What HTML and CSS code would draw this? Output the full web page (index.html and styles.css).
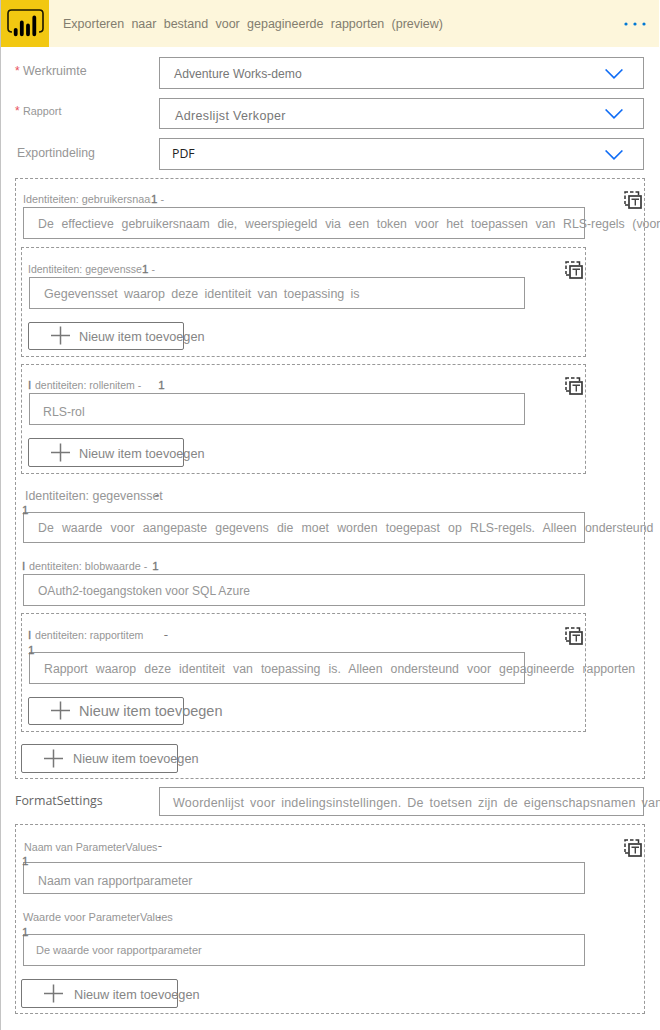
FILE: index.html
```html
<!DOCTYPE html>
<html lang="nl">
<head>
<meta charset="utf-8">
<title>Exporteren naar bestand voor gepagineerde rapporten</title>
<link rel="stylesheet" href="styles.css">
</head>
<body>
<svg class="defs" aria-hidden="true">
  <symbol id="switch" viewBox="0 0 18 18">
    <path d="M1 2.500V1H4M6 1h3.500M11.500 1h3v3M1 4.500v3.500M1 10v3M1 14h3.500" fill="none" stroke="#333" stroke-width="1.5"/>
    <rect x="5" y="5" width="12" height="12" fill="#fff" stroke="#3a3a3a" stroke-width="1.700"/>
    <path d="M7.500 8.200h7.500M11.300 8v6.500" fill="none" stroke="#444" stroke-width="1.4"/>
  </symbol>
  <symbol id="plus" viewBox="0 0 19 19">
    <path d="M0 9.5h19M9.5 .5v18" fill="none" stroke="#777" stroke-width="1.5"/>
  </symbol>
  <symbol id="chevron" viewBox="0 0 18 10">
    <path d="M.6 .5 9 8.800 17.400 .5" fill="none" stroke="#0f6cf5" stroke-width="1.600"/>
  </symbol>
</svg>
<main class="card">
  <header class="card-header">
    <div class="logo">
      <svg width="48" height="47" viewBox="0 0 48 47">
        <path d="M11 32C8 32 7 31 7 28.500V13.500C7 11 8 10 10.500 10H38.500C41 10 42 11 42 13.500V28.500C42 31 41 32 38 32" fill="none" stroke="#1b1600" stroke-width="1.600"/>
        <path d="M14.700 29.800v4.500M20.800 22.500v11.800M27 25.500v8.800M33.300 17.500v16.800" fill="none" stroke="#000" stroke-width="3.800" stroke-linecap="round"/>
      </svg>
    </div>
    <h1 class="title">Exporteren naar bestand voor gepagineerde rapporten (preview)</h1>
    <svg class="more" width="22" height="4" viewBox="0 0 22 4"><g fill="#0078d4"><circle cx="2" cy="2" r="1.600"/><circle cx="11" cy="2" r="1.600"/><circle cx="20" cy="2" r="1.600"/></g></svg>
  </header>

  <div class="row row-workspace">
    <div class="name"><span class="req">*</span><span class="t-werk">Werkruimte</span></div>
    <div class="box select"><span class="t-adv">Adventure Works-demo</span><svg class="chev"><use href="#chevron"/></svg></div>
  </div>
  <div class="row row-report">
    <div class="name"><span class="req">*</span><span class="t-rap">Rapport</span></div>
    <div class="box select"><span class="t-adres">Adreslijst Verkoper</span><svg class="chev"><use href="#chevron"/></svg></div>
  </div>
  <div class="row row-format">
    <div class="name"><span class="t-exp">Exportindeling</span></div>
    <div class="box select"><span class="t-pdf">PDF</span><svg class="chev"><use href="#chevron"/></svg></div>
  </div>

  <section class="group group-ids">
    <div class="label l-user"><span class="clip-user">Identiteiten: gebruikersnaam</span><b class="one">1</b><span class="dash">-</span><svg class="switch"><use href="#switch"/></svg></div>
    <div class="box input i-user"><span>De effectieve gebruikersnaam die, weerspiegeld via een token voor het toepassen van RLS-regels (voor</span></div>

    <section class="sub sub-dataset">
      <div class="label l-set"><span class="clip-set">Identiteiten: gegevensset</span><b class="one">1</b><span class="dash">-</span><svg class="switch"><use href="#switch"/></svg></div>
      <div class="box input i-set"><span>Gegevensset waarop deze identiteit van toepassing is</span></div>
      <div class="button b-set"><svg class="plus"><use href="#plus"/></svg><span>Nieuw item toevoegen</span></div>
    </section>

    <section class="sub sub-roles">
      <div class="label l-role"><b class="cap">I</b><span>dentiteiten: rollenitem -</span><b class="one">1</b><svg class="switch"><use href="#switch"/></svg></div>
      <div class="box input i-role"><span>RLS-rol</span></div>
      <div class="button b-role"><svg class="plus"><use href="#plus"/></svg><span>Nieuw item toevoegen</span></div>
    </section>

    <div class="label l-custom"><span>Identiteiten: gegevensset</span><b class="over-dash">-</b><b class="over-one">1</b></div>
    <div class="box input i-custom"><span>De waarde voor aangepaste gegevens die moet worden toegepast op RLS-regels. Alleen ondersteund</span></div>

    <div class="label l-blob"><b class="cap">I</b><span>dentiteiten: blobwaarde -</span><b class="one">1</b></div>
    <div class="box input i-blob"><span>OAuth2-toegangstoken voor SQL Azure</span></div>

    <section class="sub sub-reports">
      <div class="label l-report"><b class="cap">I</b><span>dentiteiten: rapportitem</span><b class="over-dash">-</b><b class="over-one">1</b><svg class="switch"><use href="#switch"/></svg></div>
      <div class="box input i-report"><span>Rapport waarop deze identiteit van toepassing is. Alleen ondersteund voor gepagineerde rapporten</span></div>
      <div class="button b-report"><svg class="plus"><use href="#plus"/></svg><span>Nieuw item toevoegen</span></div>
    </section>

    <div class="button b-ids"><svg class="plus"><use href="#plus"/></svg><span>Nieuw item toevoegen</span></div>
  </section>

  <div class="row row-settings">
    <div class="name"><span class="t-fmt">FormatSettings</span></div>
    <div class="box"><span class="t-words">Woordenlijst voor indelingsinstellingen. De toetsen zijn de eigenschapsnamen van</span></div>
  </div>

  <section class="group group-params">
    <div class="label l-pname"><span>Naam van ParameterValues</span><b class="over-dash">-</b><b class="over-one">1</b><svg class="switch"><use href="#switch"/></svg></div>
    <div class="box input i-pname"><span>Naam van rapportparameter</span></div>
    <div class="label l-pvalue"><span>Waarde voor ParameterValues</span><b class="over-dash">-</b><b class="over-one">1</b></div>
    <div class="box input i-pvalue"><span>De waarde voor rapportparameter</span></div>
    <div class="button b-params"><svg class="plus"><use href="#plus"/></svg><span>Nieuw item toevoegen</span></div>
  </section>
</main>
</body>
</html>
```
FILE: styles.css
```css
* { box-sizing: border-box; }
body {
  margin: 0;
  width: 660px;
  height: 1030px;
  overflow: hidden;
  background: #fff;
  color: #969696;
  font: 12.3px/16px "Liberation Sans", Arial, sans-serif;
}
.defs { display: none; }
.card { height: 1030px; border-left: 1px solid #c4c4c4; white-space: nowrap; }
svg { display: block; flex: none; }

/* header */
.card-header { display: flex; width: 658px; height: 47px; background: #fdf6db; }
.logo { width: 48px; height: 47px; background: #f2c811; }
.title { margin: 16px 0 0 14px; width: 400px; font-size: 12.5px; font-weight: 400; word-spacing: 3.8px; color: #827d6f; }
.more { margin: 22px 0 0 161px; }

/* name + control rows */
.row { display: flex; }
.name { display: flex; flex: none; width: 158px; padding-left: 14px; }
.box { flex: none; display: flex; width: 485px; border: 1px solid #999; }
.box > span { flex: none; }
.req { width: 8px; font-size: 12px; color: #e8505b; }
.select { color: #777; justify-content: space-between; padding-right: 20px; }
.chev { width: 18px; height: 10px; }
.row-workspace { margin-top: 10px; }
.row-workspace .box { height: 32px; padding-top: 8px; }
.row-workspace .name { padding-top: 6px; }
.row-workspace .chev { margin-top: 3px; }
.row-report { margin-top: 9px; }
.row-report .box { height: 31px; padding-top: 9px; }
.row-report .name { padding-top: 5px; }
.row-report .chev { margin-top: 1px; }
.row-format { margin-top: 9px; }
.row-format .box { height: 32px; padding-top: 7px; }
.row-format .name { padding: 7px 0 0 16px; }
.row-format .chev { margin-top: 4px; }
.row-settings { margin-top: 8px; }
.row-settings .box { height: 29px; padding-top: 7px; }
.row-settings .name { padding-top: 6px; }
.t-werk { font-size: 12.5px; }
.t-rap { font-size: 10.8px; }
.t-exp { font-size: 12.3px; }
.t-adv { margin-left: 14px; font-size: 12.2px; }
.t-adres { margin-left: 15px; font-size: 12.5px; letter-spacing: .35px; }
.t-pdf { margin-left: 12px; font: 12.3px/16px "Open Sans", sans-serif; color: #222; }
.t-fmt { font: 12.4px/16px "Open Sans", sans-serif; color: #666; }
.t-words { margin-left: 13px; font-size: 12.5px; letter-spacing: .22px; word-spacing: 2.2px; }

/* dashed containers */
.group { margin: 8px 0 0 14px; width: 630px; border: 1px dashed #999; }
.group-ids { height: 601px; }
.group-params { height: 190px; }
.sub { margin-left: 5px; width: 565px; border: 1px dashed #999; }
.sub-dataset { margin-top: 8px; height: 110px; }
.sub-roles { margin-top: 7px; height: 110px; }
.sub-reports { margin-top: 7px; height: 119px; }

/* labels */
.label { position: relative; display: flex; padding-left: 7px; font-size: 10.8px; }
.label b { color: #777; font-weight: 400; font-size: 11.5px; -webkit-text-stroke: .3px #777; }
.switch { width: 18px; height: 18px; margin-left: auto; }
.group > .label .switch { margin-right: 2px; }
.sub > .label { padding-left: 6px; font-size: 10.5px; }
.sub > .label .switch { margin-right: 2px; }
.cap { width: 7px; }
.over-dash, .over-one { position: absolute; }
.clip-user, .clip-set { overflow: hidden; }
.l-user { height: 28px; padding-top: 12px; }
.clip-user { width: 128px; }
.l-user .dash { margin-left: 3px; }
.l-set { height: 29px; padding-top: 13px; }
.clip-set { width: 114px; }
.l-set .dash { margin-left: 3px; }
.l-role { height: 28px; padding-top: 12px; }
.l-role .one { margin-left: 17px; }
.l-custom { height: 38px; padding: 14px 0 0 9px; font-size: 12.4px; }
.l-custom .over-dash { left: 139px; top: 12px; }
.l-custom .over-one { left: 6px; top: 28px; }
.l-blob { height: 31px; padding: 15px 0 0 6px; font-size: 10.8px; }
.l-blob .one { margin-left: 5px; }
.l-report { height: 38px; padding-top: 13px; }
.sub > .l-report { font-size: 10.6px; }
.l-report .over-dash { left: 142px; top: 12px; }
.l-report .over-one { left: 6px; top: 28px; }
.l-pname { height: 37px; padding: 14px 0 0 8px; }
.group > .l-pname { font-size: 10.7px; }
.l-pname .over-dash { left: 142px; top: 12px; }
.l-pname .over-one { left: 6px; top: 28px; }
.l-pvalue { height: 40px; padding: 15px 0 0 7px; }
.group > .l-pvalue { font-size: 11px; }
.l-pvalue .over-dash { left: 141px; top: 14px; }
.l-pvalue .over-one { left: 6px; top: 30px; }

/* text boxes; the hint text runs past the right edge */
.input { width: 562px; height: 32px; margin-left: 7px; padding: 8px 0 0 14px; }
.sub .input { width: 496px; }
.i-user { padding-top: 8px; word-spacing: 4.3px; }
.i-set { font-size: 12.5px; word-spacing: 2.8px; }
.sub .i-role { padding: 10px 0 0 13px; }
.i-custom { height: 31px; padding-top: 7px; word-spacing: 4.85px; }
.i-blob { font-size: 12.05px; }
.i-report { word-spacing: 4.7px; }
.i-pname { padding-top: 10px; }
.i-pvalue { padding: 7px 0 0 12px; font-size: 11px; }

/* buttons */
.button { display: flex; width: 157px; height: 29px; margin-left: 5px; padding-left: 22px; border: 1px solid #777; border-radius: 2px; color: #858585; font-size: 12.7px; }
.sub .button { width: 156px; margin-left: 6px; }
.plus { width: 19px; height: 19px; margin-top: 4px; }
.button span { flex: none; margin: 6px 0 0 9px; }
.b-set, .b-report, .b-role { margin-top: 13px; }
.b-set, .b-report { height: 28px; }
.sub .plus { margin-top: 3px; }
.sub-roles .plus { margin-top: 4px; }
.b-role span { margin-top: 7px; }
.b-report { font-size: 14.5px; }
.sub .b-report span { margin-top: 5px; }
.b-ids { margin-top: 12px; }
.b-ids span { margin-left: 10px; }
.b-params { margin-top: 13px; }
.b-params span { margin: 7px 0 0 11px; }
```
